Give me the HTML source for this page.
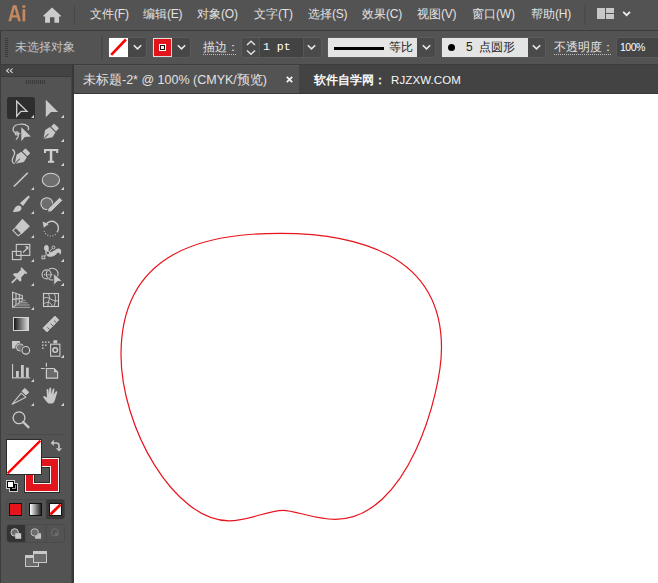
<!DOCTYPE html>
<html><head><meta charset="utf-8">
<style>
*{margin:0;padding:0;box-sizing:border-box}
html,body{width:658px;height:583px;overflow:hidden;background:#535353;font-family:"Liberation Sans",sans-serif;color:#d9d9d9}
.a{position:absolute}
.t{position:absolute;white-space:nowrap;font-size:12px;line-height:14px}
#menubar{left:0;top:0;width:658px;height:30px;background:#535353}
#ctrl{left:0;top:30px;width:658px;height:35px;background:#535353;border-top:1px solid #3c3c3c;border-bottom:1px solid #3c3c3c;border-left:1px solid #3c3c3c}
#tabbar{left:72px;top:65px;width:586px;height:29px;background:#434343}
#tab{left:73px;top:65px;width:226px;height:28px;background:#535353;border-left:1px solid #5b5b5b;border-top:1px solid #5b5b5b}
#canvas{left:74px;top:94px;width:584px;height:489px;background:#fff}
#panel{left:0;top:65px;width:72px;height:518px;background:#535353;border-left:1px solid #3c3c3c;border-right:1px solid #444}
#phead{left:1px;top:65px;width:70px;height:12px;background:#434343;border-bottom:1px solid #3a3a3a}
.menu{top:7px;font-size:12px;color:#e2e2e2}
.l{letter-spacing:-0.2px}
</style></head><body>
<div class="a" id="menubar"></div>
<div class="a" id="ctrl"></div>
<div class="a" id="tabbar"></div>
<div class="a" id="tab"></div>
<div class="a" id="canvas"></div>
<div class="a" id="panel"></div>
<div class="a" id="phead"></div>
<div class="a" style="left:72px;top:65px;width:2px;height:518px;background:#383838"></div>
<div class="a" style="left:73px;top:93px;width:585px;height:1px;background:#383838"></div>

<!-- menu bar -->
<svg class="a" style="left:0;top:0" width="30" height="30" viewBox="0 0 30 30"><path d="M12.9 5.3 L16.4 5.3 L20.9 21.3 L18.2 21.3 L17.2 17.5 L12.1 17.5 L11.1 21.3 L8.4 21.3 Z M12.7 15.2 L16.6 15.2 L14.65 7.9 Z" fill="#c68a5e" fill-rule="evenodd"/><rect x="22.5" y="9.2" width="2.7" height="12.1" fill="#c68a5e"/><rect x="22.4" y="5.3" width="2.9" height="2.5" rx="0.6" fill="#c68a5e"/></svg>
<svg class="a" style="left:0;top:0" width="70" height="30" viewBox="0 0 70 30"><path d="M52.1 7.6 L60.8 15.6 Q61.6 16.6 60.4 16.6 L59.1 16.6 L59.1 22.7 L54.4 22.7 L54.4 17.2 L50 17.2 L50 22.7 L45.1 22.7 L45.1 16.6 L43.8 16.6 Q42.6 16.6 43.4 15.6 Z" fill="#cccccc"/></svg>
<div class="a" style="left:74px;top:6px;width:1px;height:19px;background:#464646"></div>
<div class="t menu" style="left:90px">文件<span class="l">(F)</span></div>
<div class="t menu" style="left:143px">编辑<span class="l">(E)</span></div>
<div class="t menu" style="left:197px">对象<span class="l">(O)</span></div>
<div class="t menu" style="left:254px">文字<span class="l">(T)</span></div>
<div class="t menu" style="left:308px">选择<span class="l">(S)</span></div>
<div class="t menu" style="left:362px">效果<span class="l">(C)</span></div>
<div class="t menu" style="left:417px">视图<span class="l">(V)</span></div>
<div class="t menu" style="left:472px">窗口<span class="l">(W)</span></div>
<div class="t menu" style="left:531px">帮助<span class="l">(H)</span></div>
<div class="a" style="left:584px;top:5px;width:2px;height:20px;background:#4b4b4b"></div>
<svg class="a" style="left:597px;top:8px" width="34" height="11" viewBox="0 0 34 11"><rect x="0" y="0" width="8" height="11" fill="#c8c8c8"/><rect x="9" y="0" width="8" height="5" fill="#c8c8c8"/><rect x="9" y="6" width="8" height="5" fill="#c8c8c8"/><path d="M26.2 3.8 L29.6 7.2 L33 3.8" stroke="#f0f0f0" stroke-width="1.7" fill="none"/></svg>


<!-- control bar -->
<svg class="a" style="left:5px;top:38px" width="3" height="20" viewBox="0 0 3 20"><g fill="#3a3a3a"><rect y="0" width="3" height="1"/><rect y="2" width="3" height="1"/><rect y="4" width="3" height="1"/><rect y="6" width="3" height="1"/><rect y="8" width="3" height="1"/><rect y="10" width="3" height="1"/><rect y="12" width="3" height="1"/><rect y="14" width="3" height="1"/><rect y="16" width="3" height="1"/><rect y="18" width="3" height="1"/></g></svg>
<div class="t" style="left:15px;top:40px;font-size:12px;color:#c4c4c4">未选择对象</div>
<div class="a" style="left:101px;top:35px;width:2px;height:25px;background:#4a4a4a"></div>
<div class="a" style="left:108px;top:37px;width:39px;height:21px;border:1px solid #5b5b5b;border-radius:3px;background:#474747"></div>
<svg class="a" style="left:109px;top:38px" width="19" height="19" viewBox="0 0 19 19"><rect width="19" height="19" fill="#fff"/><path d="M2.2 16.9 L16.9 1.5" stroke="#ff0000" stroke-width="2.6"/></svg>
<svg class="a" style="left:133px;top:44px" width="9" height="7" viewBox="0 0 9 7"><path d="M0.8 1.2 L4.5 4.9 L8.2 1.2" stroke="#e8e8e8" stroke-width="1.6" fill="none"/></svg>
<div class="a" style="left:152px;top:37px;width:39px;height:21px;border:1px solid #5b5b5b;border-radius:3px;background:#474747"></div>
<div class="a" style="left:153px;top:38px;width:19px;height:19px;background:#e3151c;border:1px solid #dcdcdc"></div>
<div class="a" style="left:159px;top:44px;width:7px;height:7px;background:#fff;border:1px solid #fff"></div>
<div class="a" style="left:160px;top:45px;width:5px;height:5px;background:#f0f0f0;border:1px solid #1a1a1a"></div>
<svg class="a" style="left:177px;top:44px" width="9" height="7" viewBox="0 0 9 7"><path d="M0.8 1.2 L4.5 4.9 L8.2 1.2" stroke="#e8e8e8" stroke-width="1.6" fill="none"/></svg>
<div class="t" style="left:203px;top:40px;font-size:12px;color:#e4e4e4">描边：</div>
<div class="a" style="left:203px;top:54px;width:33px;height:1px;border-top:1px dotted #bdbdbd"></div>
<div class="a" style="left:241px;top:37px;width:81px;height:21px;border:1px solid #5a5a5a;border-radius:3px;background:#4a4a4a"></div>
<div class="a" style="left:259px;top:38px;width:45px;height:19px;background:#434343;border-left:1px solid #555;border-right:1px solid #555"></div>
<svg class="a" style="left:246px;top:40px" width="10" height="16" viewBox="0 0 10 16"><path d="M1 5 L5 1.2 L9 5 M1 10.5 L5 14.3 L9 10.5" stroke="#e0e0e0" stroke-width="1.5" fill="none"/></svg>
<div class="t" style="left:263px;top:40px;font-family:'Liberation Mono',monospace;font-size:11.5px;color:#ffffff">1 pt</div>
<svg class="a" style="left:307px;top:44px" width="9" height="7" viewBox="0 0 9 7"><path d="M0.8 1.2 L4.5 4.9 L8.2 1.2" stroke="#e8e8e8" stroke-width="1.6" fill="none"/></svg>
<div class="a" style="left:327px;top:37px;width:109px;height:21px;border:1px solid #5a5a5a;border-radius:3px;background:#4a4a4a"></div>
<div class="a" style="left:328px;top:38px;width:89px;height:19px;background:#e4e4e4"></div>
<div class="a" style="left:334px;top:47px;width:50px;height:3px;background:#000"></div>
<div class="t" style="left:389px;top:40px;font-size:12px;color:#222">等比</div>
<svg class="a" style="left:422px;top:44px" width="9" height="7" viewBox="0 0 9 7"><path d="M0.8 1.2 L4.5 4.9 L8.2 1.2" stroke="#e8e8e8" stroke-width="1.6" fill="none"/></svg>
<div class="a" style="left:441px;top:37px;width:105px;height:21px;border:1px solid #5a5a5a;border-radius:3px;background:#4a4a4a"></div>
<div class="a" style="left:442px;top:38px;width:86px;height:19px;background:#e4e4e4"></div>
<div class="a" style="left:448px;top:44px;width:7px;height:7px;border-radius:50%;background:#000"></div>
<div class="t" style="left:466px;top:40px;font-size:12px;color:#222">5&nbsp; 点圆形</div>
<svg class="a" style="left:532px;top:44px" width="9" height="7" viewBox="0 0 9 7"><path d="M0.8 1.2 L4.5 4.9 L8.2 1.2" stroke="#e8e8e8" stroke-width="1.6" fill="none"/></svg>
<div class="t" style="left:554px;top:40px;font-size:12px;color:#e4e4e4">不透明度：</div>
<div class="a" style="left:554px;top:54px;width:57px;height:1px;border-top:1px dotted #bdbdbd"></div>
<div class="a" style="left:616px;top:37px;width:60px;height:21px;border:1px solid #5a5a5a;border-radius:3px;background:#454545"></div>
<div class="t" style="left:620px;top:40px;font-size:10.5px;letter-spacing:-0.5px;color:#ffffff">100%</div>

<!-- tabs -->
<div class="t" style="left:83px;top:72.6px;font-size:12.5px;color:#e2e2e2">未标题-2* @ 100% (CMYK/预览)</div>
<svg class="a" style="left:286px;top:76px" width="7" height="7" viewBox="0 0 7 7"><path d="M0.8 0.8 L6.2 6.2 M6.2 0.8 L0.8 6.2" stroke="#f0f0f0" stroke-width="1.8"/></svg>
<div class="t" style="left:314px;top:73px;font-size:12px;font-weight:bold;color:#f8f8f8">软件自学网：<span style="font-size:11.5px;font-weight:normal;letter-spacing:0.1px;margin-left:5px">RJZXW.COM</span></div>

<!-- toolbar -->
<svg class="a" style="left:0;top:60px" width="20" height="20" viewBox="0 60 20 20"><path d="M9 68.6 L6.6 70.7 L9 72.8 M12.6 68.6 L10.2 70.7 L12.6 72.8" fill="none" stroke="#d8d8d8" stroke-width="1.1"/></svg>
<svg class="a" style="left:0;top:0" width="72" height="583" viewBox="0 0 72 583">
<g fill="#3a3a3a"><rect x="26" y="80" width="1" height="4"/><rect x="28" y="80" width="1" height="4"/><rect x="30" y="80" width="1" height="4"/><rect x="32" y="80" width="1" height="4"/><rect x="34" y="80" width="1" height="4"/><rect x="36" y="80" width="1" height="4"/><rect x="38" y="80" width="1" height="4"/><rect x="40" y="80" width="1" height="4"/><rect x="42" y="80" width="1" height="4"/><rect x="44" y="80" width="1" height="4"/></g>
<rect x="7" y="97" width="28" height="22" rx="2.5" fill="#2e2e2e"/>
<g fill="#d2d2d2">
<path d="M31 118 L34 118 L34 114.8 Z"/><path d="M60.8 118 L64 118 L64 114.8 Z"/>
<path d="M60.8 142 L64 142 L64 138.8 Z"/>
<path d="M60.8 166 L64 166 L64 162.8 Z"/>
<path d="M31 190 L34 190 L34 186.8 Z"/><path d="M60.8 190 L64 190 L64 186.8 Z"/>
<path d="M31 214 L34 214 L34 210.8 Z"/><path d="M60.8 214 L64 214 L64 210.8 Z"/>
<path d="M31 238 L34 238 L34 234.8 Z"/><path d="M60.8 238 L64 238 L64 234.8 Z"/>
<path d="M31 262 L34 262 L34 258.8 Z"/><path d="M60.8 262 L64 262 L64 258.8 Z"/>
<path d="M31 286 L34 286 L34 282.8 Z"/><path d="M60.8 286 L64 286 L64 282.8 Z"/>
<path d="M31 310 L34 310 L34 306.8 Z"/>
<path d="M60.8 358 L64 358 L64 354.8 Z"/>
<path d="M31 382 L34 382 L34 378.8 Z"/>
<path d="M31 406 L34 406 L34 402.8 Z"/><path d="M60.8 406 L64 406 L64 402.8 Z"/>
</g>
<g fill="none" stroke="#d0d0d0" stroke-width="1.3">
<!-- selection -->
<path d="M16.7 101.2 L27 111.4 L21 111.4 L16.7 116.2 Z" stroke-linejoin="miter"/>
</g>
<g fill="#c8c8c8">
<!-- direct selection -->
<path d="M45.8 99.8 L58.1 111.9 L51 111.9 L45.8 117.2 Z"/>
<!-- lasso arrow -->
<path d="M21.3 127.3 L30.9 136.4 L24.8 136.9 L21.3 141.2 Z"/>
</g>
<g fill="none" stroke="#c8c8c8" stroke-width="1.2">
<path d="M20.3 133.6 C15 134.4 12 131 13.5 127.4 C15.2 123.8 24.5 123 27.8 126.2 C29 127.6 28.7 129.3 27.8 130.2"/>
<circle cx="16.8" cy="133.4" r="1.6"/>
<path d="M18.3 134.5 C19 136.5 17.5 138 16 139.6"/>
</g>
<!-- pen -->
<g transform="translate(49.2 133.2) rotate(45) scale(1.08)">
<rect x="-3.2" y="-9.6" width="6.4" height="4" rx="0.6" fill="#c8c8c8"/>
<path d="M-3.6 -4.6 L3.6 -4.6 L4.8 0.5 L0 7.6 L-4.8 0.5 Z" fill="#c8c8c8"/>
<path d="M0 1 L0 7.6" stroke="#535353" stroke-width="0.9"/>
</g>
<!-- curvature pen -->
<g transform="translate(20.6 158) rotate(45) scale(1.08)">
<rect x="-3.2" y="-9.6" width="6.4" height="4" rx="0.6" fill="#c8c8c8"/>
<path d="M-3.6 -4.6 L3.6 -4.6 L4.8 0.5 L0 7.6 L-4.8 0.5 Z" fill="#c8c8c8"/>
<path d="M0 1 L0 7.6" stroke="#535353" stroke-width="0.9"/>
</g>
<path d="M12.4 149.4 C15.2 151.2 15.2 153.5 13.6 156.3 C11.6 159.8 11.8 163 14.6 163.6" fill="none" stroke="#c8c8c8" stroke-width="1.3"/>
<!-- type -->
<g fill="#d0d0d0">
<rect x="44" y="149" width="14.2" height="2.1"/><rect x="44" y="149" width="2" height="4"/><rect x="56.2" y="149" width="2" height="4"/>
<rect x="49.8" y="150.5" width="2.5" height="11.5"/><rect x="48.1" y="160.8" width="6" height="2"/>
</g>
<!-- line -->
<path d="M13.9 186.5 L27.8 172.8" stroke="#cacaca" stroke-width="1.6"/>
<!-- ellipse -->
<ellipse cx="50.9" cy="180" rx="8.6" ry="6.8" fill="#6e6e6e" stroke="#d0d0d0" stroke-width="1.1"/>
<!-- brush -->
<path d="M19.9 203.2 L27.9 196 Q29.6 195.4 29.5 197.2 L23.1 205.9 Z" fill="#c8c8c8"/>
<path d="M12.9 211.9 C14 209.6 14.5 207.7 16.1 206.4 C17.7 205.1 19.9 205.3 20.9 206.5 C21.9 207.7 21.6 209.6 20.2 210.8 C18.6 212 15.8 212 12.9 211.9 Z" fill="#c8c8c8"/>
<!-- shaper -->
<circle cx="46.8" cy="203.6" r="5.9" fill="#6e6e6e" stroke="#d0d0d0" stroke-width="1.1"/>
<path d="M59.6 197.2 L62.8 200.4 L51.2 211.8 L47.6 212.2 L47.9 208.6 Z" fill="#c8c8c8" stroke="#535353" stroke-width="1"/>
<!-- eraser -->
<path d="M22.4 218.8 L29.9 226.2 L21.6 234.2 L15 227.2 Z" fill="#c8c8c8"/>
<path d="M15.6 227.8 L12.8 230.4 L18.2 235.9 L21.2 233.4" fill="none" stroke="#c8c8c8" stroke-width="1.15" stroke-linejoin="round"/>
<!-- rotate -->
<path d="M45.6 225 A6.8 6.8 0 1 1 57 232.3" fill="none" stroke="#c8c8c8" stroke-width="1.4"/>
<path d="M42.6 221.4 L48.6 224.2 L43.8 227.8 Z" fill="#c8c8c8"/>
<g fill="#c8c8c8"><circle cx="55.3" cy="234.6" r="0.6"/><circle cx="52.9" cy="235.8" r="0.6"/><circle cx="50.3" cy="236" r="0.6"/><circle cx="47.8" cy="235.2" r="0.6"/><circle cx="45.6" cy="233.6" r="0.6"/><circle cx="44.2" cy="231.3" r="0.6"/></g>
<!-- scale -->
<g fill="none" stroke="#cccccc" stroke-width="1.1">
<rect x="16.3" y="244.4" width="13.5" height="11"/>
<rect x="12.4" y="251.4" width="8.6" height="8.2"/>
<path d="M23 252.5 L28 247.5"/>
</g>
<path d="M28.4 246.2 L28.4 250 L24.6 246.2 Z" fill="#cccccc"/>
<!-- width -->
<path d="M44.1 249.2 C43.6 246.6 44.9 245 46.5 245 C48.2 245 49 246.8 48.8 248.6 C48.6 250.2 48.4 251.6 49.7 252 C51.2 252.4 53.6 251 55.6 249.6 C57.6 248.2 59.7 248 60.7 249.8 C61.5 251.2 61.1 253.6 60.1 255 C59.7 253.6 59.1 252.4 58.1 252.6 C57.1 252.8 56.3 254.6 54.7 255.6 C52.7 256.8 49.7 257.3 47.6 256.3 C45.6 255.3 45.2 253 45.4 251.4 C45.5 250.4 44.5 250.2 44.1 249.2 Z" fill="#c8c8c8"/>
<path d="M43.4 257.2 L53.4 247.6" stroke="#535353" stroke-width="2.3"/>
<path d="M43.4 257.2 L53.4 247.6" stroke="#c8c8c8" stroke-width="0.9"/>
<circle cx="47.8" cy="252.9" r="1.8" fill="#535353" stroke="#c8c8c8" stroke-width="1"/>
<circle cx="53.5" cy="247.4" r="1.4" fill="#535353" stroke="#c8c8c8" stroke-width="1"/>
<rect x="42" y="256" width="2.8" height="2.8" fill="#535353" stroke="#c8c8c8" stroke-width="1"/>
<!-- pin -->
<g transform="translate(17.3 277.3) rotate(45) scale(1.12)">
<path d="M-3.6 -9 L3.6 -9 L3.6 -7.4 L2.4 -7.4 L2.4 -2.6 L4.6 -0.6 L4.6 1 L-4.6 1 L-4.6 -0.6 L-2.4 -2.6 L-2.4 -7.4 L-3.6 -7.4 Z" fill="#c8c8c8"/>
<rect x="-0.75" y="1" width="1.5" height="6" fill="#c8c8c8"/>
</g>
<!-- shape builder -->
<g fill="none" stroke="#c8c8c8" stroke-width="1.1">
<circle cx="52.2" cy="274.1" r="5.9"/><circle cx="46.6" cy="274.4" r="4.5" stroke="#535353" stroke-width="2.2"/><circle cx="46.6" cy="274.4" r="4.5"/>
</g>
<g fill="#e0e0e0"><rect x="44" y="274.2" width="1.1" height="1.1"/><rect x="46.2" y="274.2" width="1.1" height="1.1"/><rect x="48.4" y="274.2" width="1.1" height="1.1"/><rect x="50.6" y="274.2" width="1.1" height="1.1"/><rect x="52.8" y="274.2" width="1.1" height="1.1"/></g>
<path d="M53.6 273.4 L62.4 281.2 L57.4 281.5 L53.8 285.4 Z" fill="#c8c8c8" stroke="#535353" stroke-width="0.9"/>
<!-- perspective grid -->
<g fill="none" stroke="#cccccc" stroke-width="1.1">
<path d="M12.6 292.2 L22.3 295.6 L22.3 301 L12.6 307.5 Z"/>
<path d="M16 293.4 L16 305.2 M19.3 294.5 L19.3 303 M12.6 299.4 L22.3 298.4"/>
</g>
<g stroke="#8e8e8e" stroke-width="1.5"><path d="M22.3 300.4 L25.6 300.4 M19.4 302.7 L27.6 302.7 M16 305 L29.6 305"/></g>
<path d="M12.6 307.4 L30.2 307.4" stroke="#9a9a9a" stroke-width="1.2"/>
<!-- mesh -->
<g fill="none" stroke="#cccccc" stroke-width="1.1">
<rect x="43.5" y="293.5" width="15" height="13" stroke-width="1.1"/>
<path d="M47.5 293 C49.5 295.5 50 297.5 49.2 299.5 C48.4 301.5 47.8 304 48 306.9 M43 298.4 C45 297.4 47.5 297.2 49.4 298.2 M49.4 298.4 C51.5 299.6 53.5 300.6 55.4 300.8 L58.8 300.8 M54 293 C55.4 295.5 55.8 298 55.4 300.8 C55 303 54.4 305 54 306.9 M43 304.6 C44.6 303 46.4 302.2 48.3 302.2 C50 302.4 51.6 304.2 52.8 306.9" stroke-width="0.9"/>
</g>
<!-- gradient -->
<defs><linearGradient id="gr" x1="0" x2="1" y1="0" y2="0"><stop offset="0" stop-color="#111"/><stop offset="1" stop-color="#dedede"/></linearGradient></defs>
<rect x="13.5" y="317.5" width="15" height="13" fill="url(#gr)" stroke="#d4d4d4" stroke-width="1"/>
<!-- ruler -->
<path d="M42.9 328 L54.9 316 L58.9 320 L46.9 332 Z" fill="#c8c8c8" stroke="#c8c8c8" stroke-width="0.8" stroke-linejoin="round"/>
<path d="M49.8 329.6 L47.4 327.2 M53.2 326.2 L50.6 323.6 M56.5 322.9 L54.1 320.5" stroke="#535353" stroke-width="0.9"/>
<!-- blend/live paint -->
<rect x="12" y="341" width="8" height="7.5" fill="#c8c8c8"/>
<circle cx="20" cy="347.4" r="4.2" fill="#7a7a7a" stroke="#535353" stroke-width="1"/>
<circle cx="20" cy="347.4" r="3.6" fill="#7a7a7a" stroke="#cccccc" stroke-width="0.9"/>
<circle cx="25.8" cy="350.3" r="4.5" fill="#535353" stroke="#535353" stroke-width="1.4"/>
<circle cx="25.8" cy="350.3" r="3.8" fill="none" stroke="#d0d0d0" stroke-width="1.1"/>
<!-- symbol sprayer -->
<g fill="#b8b8b8"><rect x="42" y="341.4" width="1.6" height="1.6"/><rect x="45" y="341.4" width="1.6" height="1.6"/><rect x="48" y="341.4" width="1.6" height="1.6"/><rect x="42" y="344.4" width="1.6" height="1.6"/><rect x="45" y="344.4" width="1.6" height="1.6"/><rect x="42" y="347.4" width="1.6" height="1.6"/></g>
<rect x="50.6" y="344.2" width="9.3" height="12" fill="none" stroke="#cccccc" stroke-width="1.1"/>
<rect x="53.4" y="340.2" width="3.8" height="3.2" fill="#c8c8c8"/>
<circle cx="55.2" cy="350" r="2.3" fill="none" stroke="#cccccc" stroke-width="1.5"/>
<!-- graph -->
<g fill="#c8c8c8"><rect x="12" y="364" width="1.1" height="14.3"/><rect x="12" y="377.3" width="18.2" height="1.1"/><rect x="16" y="371" width="2.8" height="6.5"/><rect x="21" y="365" width="2.8" height="12.5"/><rect x="26" y="367.6" width="2.8" height="9.9"/></g>
<!-- artboard -->
<path d="M46.4 362.8 L46.4 366.8 M40.9 368.5 L44.8 368.5" stroke="#cccccc" stroke-width="1.1"/>
<path d="M46.4 368.5 L54 368.5 L57.6 372 L57.6 378.2 L46.4 378.2 Z" fill="#6a6a6a" stroke="#cccccc" stroke-width="1.2"/>
<path d="M54 368.5 L54 372.2 L57.6 372.2 Z" fill="#cccccc"/>
<!-- knife -->
<path d="M12.2 404.2 L21.2 393.2 L25.8 397.2 Z" fill="none" stroke="#c8c8c8" stroke-width="1.1" stroke-linejoin="round"/>
<path d="M22 391.2 L24.8 388.4 L28.8 392.2 L26 395 Z" fill="#c8c8c8" stroke="#c8c8c8" stroke-width="1" stroke-linejoin="round"/>
<!-- hand -->
<path d="M48.6 403.6 C46.6 402 44.8 399.6 43.4 397.6 C42.7 396.6 43.6 395.7 44.6 396.2 L47 397.6 L46.6 390 C46.6 388.8 48.4 388.8 48.5 390 L48.9 394.4 L49.3 388.4 C49.4 387.2 51.2 387.2 51.2 388.4 L51.4 394.2 L52.7 389.2 C53 388 54.6 388.4 54.4 389.6 L53.6 394.8 L55.6 391.8 C56.2 390.8 57.6 391.4 57.2 392.6 L55.2 399.2 C54.4 402 53.4 403.6 51.6 403.6 Z" fill="#c8c8c8"/>
<!-- zoom -->
<circle cx="19" cy="417.8" r="5.9" fill="none" stroke="#cccccc" stroke-width="1.3"/>
<path d="M23.2 422 L28.4 427.2" stroke="#c8c8c8" stroke-width="2.4" stroke-linecap="round"/>
<!-- separator -->
<rect x="6" y="434" width="60" height="1" fill="#4a4a4a"/>
<!-- stroke swatch -->
<rect x="24" y="457" width="36" height="36" fill="#2b2b2b"/>
<rect x="25" y="458" width="34" height="34" fill="#f4f4f4"/>
<rect x="26" y="459" width="32" height="32" fill="#e3151c"/>
<rect x="33" y="466" width="18" height="18" fill="#f4f4f4"/>
<rect x="34" y="467" width="16" height="16" fill="#2b2b2b"/>
<rect x="35" y="468" width="14" height="14" fill="#535353"/>
<!-- fill swatch -->
<rect x="6" y="439" width="36" height="36" fill="#2b2b2b"/>
<rect x="7" y="440" width="34" height="34" fill="#ffffff"/>
<path d="M7.6 473.4 L40.4 440.6" stroke="#ff0000" stroke-width="2.2"/>
<!-- swap arrows -->
<path d="M53 443 L56.4 443 Q59 443 59 445.6 L59 448.6" fill="none" stroke="#c4c4c4" stroke-width="1.7"/>
<path d="M50.6 442.9 L53.9 439.7 L53.9 446.1 Z" fill="#c4c4c4"/>
<path d="M55.8 448.2 L62.2 448.2 L59 451.5 Z" fill="#c4c4c4"/>
<!-- default fill/stroke -->
<rect x="6.5" y="480.5" width="8" height="8" fill="#000" stroke="#cfcfcf" stroke-width="1"/>
<rect x="9.5" y="483.5" width="8" height="8" fill="#000" stroke="#cfcfcf" stroke-width="1"/>
<rect x="7" y="481" width="7" height="7" fill="#000"/>
<rect x="8" y="482" width="5" height="5" fill="#fff"/>
<path d="M12 488.5 L15.5 488.5 L15.5 485" fill="none" stroke="#bdbdbd" stroke-width="0.8"/>
</svg>

<!-- bottom controls -->
<svg class="a" style="left:0;top:490px" width="72" height="93" viewBox="0 490 72 93">
<rect x="6.5" y="499.5" width="58" height="19.5" rx="3" fill="#535353" stroke="#4a4a4a" stroke-width="1"/>
<path d="M46 499.5 L61.5 499.5 Q64.5 499.5 64.5 502.5 L64.5 516 Q64.5 519 61.5 519 L46 519 Z" fill="#393939"/>
<rect x="25.5" y="500" width="1" height="19" fill="#4a4a4a"/><rect x="45.5" y="500" width="1" height="19" fill="#4a4a4a"/>
<rect x="9" y="503" width="13" height="13" fill="#111"/><rect x="10" y="504" width="11" height="11" fill="#e8141b"/>
<defs><linearGradient id="gw" x1="0" x2="1"><stop offset="0" stop-color="#fff"/><stop offset="1" stop-color="#222"/></linearGradient></defs>
<rect x="29" y="503" width="13" height="13" fill="#111"/><rect x="30" y="504" width="11" height="11" fill="url(#gw)"/>
<rect x="49" y="503" width="13" height="13" fill="#111"/><rect x="50" y="504" width="11" height="11" fill="#fff"/>
<path d="M50.4 514.4 L60.6 504.4" stroke="#ff0000" stroke-width="2.8"/>
<rect x="6.5" y="524.5" width="58" height="18" rx="3" fill="#535353" stroke="#4a4a4a" stroke-width="1"/>
<path d="M7 528 Q7 525 10 525 L25 525 L25 542 L10 542 Q7 542 7 539 Z" fill="#333333"/>
<rect x="25.5" y="525" width="1" height="17" fill="#4a4a4a"/><rect x="45.5" y="525" width="1" height="17" fill="#4a4a4a"/>
<circle cx="14.7" cy="532.4" r="3.7" fill="#6e6e6e" stroke="#cccccc" stroke-width="1"/>
<rect x="15.2" y="533.2" width="6" height="5.6" fill="#c8c8c8"/>
<rect x="35.1" y="533.2" width="6" height="5.6" fill="#c0c0c0"/>
<circle cx="34.7" cy="532.4" r="3.7" fill="#6e6e6e" stroke="#bdbdbd" stroke-width="1"/>
<circle cx="54.9" cy="532.4" r="3.6" fill="none" stroke="#6e6e6e" stroke-width="1"/>
<rect x="55" y="532.6" width="3.2" height="3.2" fill="#6e6e6e"/>
<rect x="25.5" y="555.5" width="13" height="11" fill="#6a6a6a" stroke="#c8c8c8" stroke-width="1"/>
<rect x="25" y="555" width="14" height="3" fill="#c8c8c8"/>
<rect x="33.5" y="551.5" width="13" height="11" fill="#6a6a6a" stroke="#c8c8c8" stroke-width="1"/>
<rect x="33" y="551" width="14" height="3" fill="#c8c8c8"/>
</svg>

<!-- canvas shape -->
<svg class="a" style="left:0;top:0" width="658" height="583" viewBox="0 0 658 583"><path d="M280.0 233.0 C354.1 233.0 441.5 252.9 441.5 347.4 C441.5 394.1 407.3 519.0 335.5 519.0 C313.3 519.0 295.1 510.0 283.0 510.0 C267.5 510.0 249.3 520.5 229.0 520.5 C174.2 520.5 121.0 426.9 121.0 354.4 C121.0 249.0 208.4 233.0 280.0 233.0Z" fill="none" stroke="#e8131c" stroke-width="1.2" transform="translate(0 0.3)"/></svg>
</body></html>
